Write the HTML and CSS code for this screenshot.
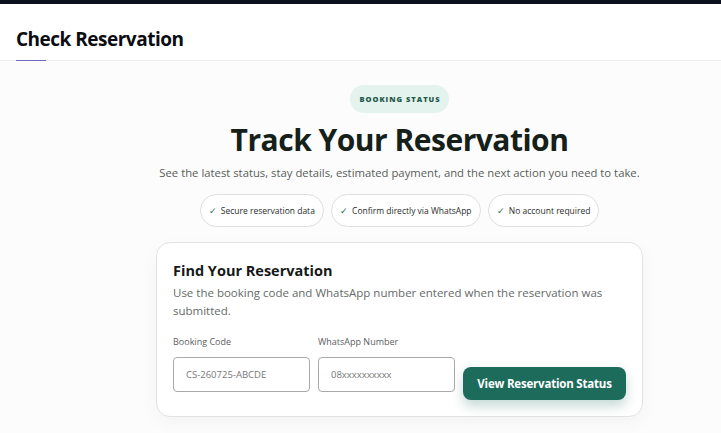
FILE: index.html
```
<!DOCTYPE html>
<html lang="en">
<head>
<meta charset="utf-8">
<title>Check Reservation</title>
<link rel="stylesheet" href="styles.css">
</head>
<body>
<div class="topbar"></div>
<header class="header">
  <h1 class="page-title">Check Reservation</h1>
  <span class="accent"></span>
</header>
<main class="main">
  <span class="badge">BOOKING STATUS</span>
  <h2 class="hero-title">Track Your Reservation</h2>
  <p class="hero-sub">See the latest status, stay details, estimated payment, and the next action you need to take.</p>
  <ul class="chips">
    <li class="chip"><span class="check">✓</span> Secure reservation data</li>
    <li class="chip"><span class="check">✓</span> Confirm directly via WhatsApp</li>
    <li class="chip"><span class="check">✓</span> No account required</li>
  </ul>
  <section class="card">
    <h3 class="card-title">Find Your Reservation</h3>
    <p class="card-desc">Use the booking code and WhatsApp number entered when the reservation was submitted.</p>
    <form class="form">
      <label class="field">
        <span class="label">Booking Code</span>
        <input class="input" type="text" placeholder="CS-260725-ABCDE">
      </label>
      <label class="field">
        <span class="label">WhatsApp Number</span>
        <input class="input" type="text" placeholder="08xxxxxxxxxx">
      </label>
      <button class="btn" type="button">View Reservation Status</button>
    </form>
  </section>
</main>
</body>
</html>
```
FILE: styles.css
```
* { box-sizing: border-box; }
html, body { margin: 0; padding: 0; }
body {
  font-family: "Open Sans", "Noto Sans", sans-serif;
  background: #fcfcfc;
  color: #1a1f1d;
  overflow: hidden;
  height: 433px;
}
.topbar { height: 4px; background: #0c0f1c; }
.header {
  background: #fff;
  height: 57px;
  padding: 0 16px;
  border-bottom: 1px solid #ececec;
  position: relative;
  display: flex;
  align-items: flex-end;
}
.page-title {
  margin: 0 0 8px;
  font-size: 19px;
  font-weight: 700;
  letter-spacing: -0.5px;
  color: #0b0d12;
}
.accent {
  position: absolute;
  left: 16px;
  bottom: -1px;
  width: 30px;
  height: 1px;
  background: #6b6bc4;
}
.main {
  display: flex;
  flex-direction: column;
  align-items: center;
  padding: 24px 0 0 78px;
  min-height: 372px;
  background: #fcfcfc;
}
.badge {
  display: inline-block;
  background: #e5f3ee;
  color: #1f5a4b;
  font-size: 7.5px;
  font-weight: 800;
  letter-spacing: 1px;
  padding: 0 8px 0 9px;
  height: 28px;
  line-height: 28px;
  border-radius: 14px;
}
.hero-title {
  margin: 7px 0 0;
  font-size: 30px;
  font-weight: 700;
  letter-spacing: -0.5px;
  line-height: 40px;
  color: #152019;
}
.hero-sub {
  margin: 4px 0 0;
  font-size: 11.3px;
  color: #585c5a;
  line-height: 18px;
}
.chips {
  list-style: none;
  margin: 12px 0 0;
  padding: 0;
  display: flex;
  gap: 7px;
}
.chip {
  height: 33px;
  line-height: 31px;
  border: 1px solid #dedede;
  border-radius: 17px;
  background: #fff;
  padding: 0 8px;
  font-size: 8.5px;
  color: #2a2d2c;
}
.check { color: #1d6b5b; margin-right: 2px; }
.card {
  margin-top: 15px;
  width: 487px;
  background: #fff;
  border: 1px solid #e3e3e3;
  border-radius: 14px;
  box-shadow: 0 6px 18px rgba(0,0,0,0.04);
  padding: 18px 16px 24px 16px;
}
.card-title {
  margin: 0;
  font-size: 14.5px;
  font-weight: 700;
  color: #151917;
  line-height: 20px;
}
.card-desc {
  margin: 3px 0 0;
  font-size: 11.5px;
  line-height: 18px;
  color: #666a68;
}
.form {
  margin-top: 15px;
  display: flex;
  align-items: flex-end;
  gap: 8px;
}
.field { display: flex; flex-direction: column; }
.label {
  font-size: 9px;
  color: #5d605f;
  margin-bottom: 9px;
}
.input {
  width: 137px;
  height: 35px;
  border: 1px solid #a9a9a9;
  border-radius: 4px;
  padding: 0 12px;
  font-family: inherit;
  font-size: 9.5px;
  color: #333;
  background: #fff;
}
.input::placeholder { color: #777; }
.btn {
  margin-bottom: -8px;
  height: 33px;
  width: 164px;
  border: none;
  border-radius: 8px;
  background: #1d6b5b;
  color: #fff;
  font-family: inherit;
  font-size: 11.5px;
  font-weight: 700;
  letter-spacing: -0.2px;
  box-shadow: 0 6px 12px rgba(29,107,91,0.25);
}
```
